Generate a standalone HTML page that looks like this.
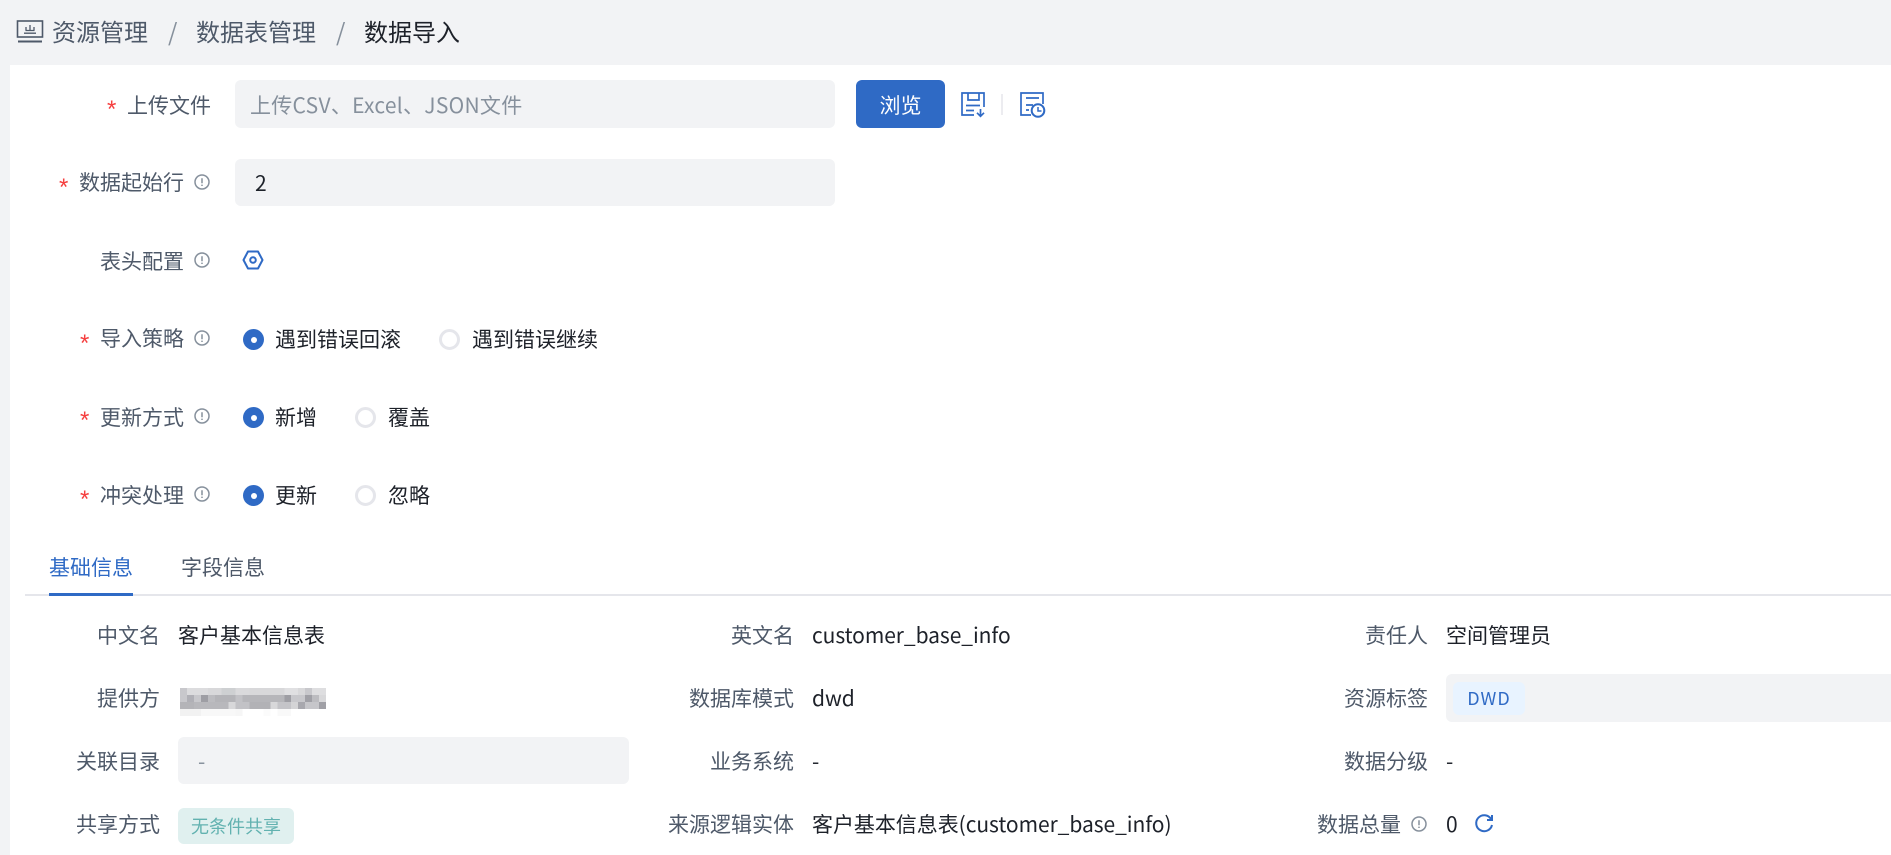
<!DOCTYPE html>
<html lang="zh">
<head>
<meta charset="utf-8">
<title>数据导入</title>
<style>
html,body{margin:0;padding:0;width:1891px;height:855px;overflow:hidden;background:#f2f3f5}
body{position:relative;font-family:"Noto Sans CJK SC","Liberation Sans",sans-serif;font-size:21px;color:#1d2129}
#w{position:absolute;left:10px;top:65px;width:1881px;height:790px;background:#fff}
.t{position:absolute;white-space:nowrap;line-height:30px;height:30px}
.l{color:#4e5969}
.s{color:#f53f3f;font-family:"Liberation Sans",sans-serif;font-size:24px}
.box{position:absolute;background:#f2f3f5;border-radius:6px}
.r{position:absolute;width:21px;height:21px;border-radius:50%;box-sizing:border-box}
.on{background:#2f6ac5}
.on:after{content:"";position:absolute;left:7.5px;top:7.5px;width:6px;height:6px;border-radius:50%;background:#fff}
.off{border:3px solid #e5e6eb;background:#fff}
svg{position:absolute;overflow:visible}
.i{width:16px;height:16px}
</style>
</head>
<body>
<div id="w"></div>

<!-- breadcrumb -->
<svg style="left:0;top:0" width="60" height="60" fill="none" stroke="#4e5969" stroke-width="1.6">
<rect x="17.5" y="21" width="25" height="16"/>
<path d="M18 41.5H42" stroke-width="2"/>
<path d="M24 33.2H36M25.5 30.5H34.5M30 25V30.5M26 27V30.5M34 27V30.5" stroke-width="1.3"/>
</svg>
<div class="t l" style="left:52px;top:16px;font-size:24px">资源管理</div>
<div class="t" style="left:168px;top:16px;font-size:24px;color:#86909c">/</div>
<div class="t l" style="left:196px;top:16px;font-size:24px">数据表管理</div>
<div class="t" style="left:336px;top:16px;font-size:24px;color:#86909c">/</div>
<div class="t" style="left:364px;top:16px;font-size:24px">数据导入</div>

<!-- row: upload -->
<div class="t s" style="left:107px;top:95px">*</div>
<div class="t l" style="left:127px;top:90px">上传文件</div>
<div class="box" style="left:235px;top:80px;width:600px;height:48px"></div>
<div class="t" style="left:250px;top:90px;color:#86909c;letter-spacing:.28px">上传CSV、Excel、JSON文件</div>
<div style="position:absolute;left:856px;top:80px;width:89px;height:48px;background:#2f6ac5;border-radius:6px;color:#fff;text-align:center;line-height:50px">浏览</div>
<svg style="left:0;top:0" width="1100" height="130" fill="none" stroke="#2f6ac5" stroke-width="1.7">
<path d="M974 115H962V93H984V107"/>
<path d="M968 93V100H979V93"/>
<path d="M966 105.5H980M966 110.5H974"/>
<path d="M980.5 109V116M977 112.8L980.5 116.3L984 112.8"/>
<path d="M1002 94V115" stroke="#e5e6eb" stroke-width="1.5"/>
<path d="M1031 115H1021V93H1043V104"/>
<path d="M1026 98H1039M1026 105H1033M1026 110H1029"/>
<circle cx="1038" cy="110.5" r="6.3" fill="#fff" stroke-width="2"/>
<path d="M1038 107V111H1041.5" stroke-width="1.5"/>
</svg>

<!-- row: start -->
<div class="t s" style="left:59px;top:173px">*</div>
<div class="t l" style="left:79px;top:167px">数据起始行</div>
<svg class="i" style="left:194px;top:174px" viewBox="0 0 16 16" fill="none" stroke="#86909c" stroke-width="1.5"><circle cx="8" cy="8" r="7"/><path d="M8 4.2V9.2M8 10.6V12"/></svg>
<div class="box" style="left:235px;top:159px;width:600px;height:47px"></div>
<div class="t" style="left:255px;top:168px">2</div>

<!-- row: header -->
<div class="t l" style="left:100px;top:246px">表头配置</div>
<svg class="i" style="left:194px;top:252px" viewBox="0 0 16 16" fill="none" stroke="#86909c" stroke-width="1.5"><circle cx="8" cy="8" r="7"/><path d="M8 4.2V9.2M8 10.6V12"/></svg>
<svg style="left:242px;top:250px" width="22" height="20" viewBox="0 0 22 20" fill="none" stroke="#2f6ac5" stroke-width="2"><path d="M1.5 10L6 1.5H16L20.5 10L16 18.5H6Z" stroke-linejoin="round"/><circle cx="11" cy="10" r="2.8"/></svg>

<!-- row: strategy -->
<div class="t s" style="left:80px;top:329px">*</div>
<div class="t l" style="left:100px;top:323px">导入策略</div>
<svg class="i" style="left:194px;top:330px" viewBox="0 0 16 16" fill="none" stroke="#86909c" stroke-width="1.5"><circle cx="8" cy="8" r="7"/><path d="M8 4.2V9.2M8 10.6V12"/></svg>
<div class="r on" style="left:243px;top:329px"></div>
<div class="t" style="left:275px;top:324px">遇到错误回滚</div>
<div class="r off" style="left:439px;top:329px"></div>
<div class="t" style="left:472px;top:324px">遇到错误继续</div>

<!-- row: update -->
<div class="t s" style="left:80px;top:406px">*</div>
<div class="t l" style="left:100px;top:402px">更新方式</div>
<svg class="i" style="left:194px;top:408px" viewBox="0 0 16 16" fill="none" stroke="#86909c" stroke-width="1.5"><circle cx="8" cy="8" r="7"/><path d="M8 4.2V9.2M8 10.6V12"/></svg>
<div class="r on" style="left:243px;top:407px"></div>
<div class="t" style="left:275px;top:402px">新增</div>
<div class="r off" style="left:355px;top:407px"></div>
<div class="t" style="left:388px;top:402px">覆盖</div>

<!-- row: conflict -->
<div class="t s" style="left:80px;top:485px">*</div>
<div class="t l" style="left:100px;top:480px">冲突处理</div>
<svg class="i" style="left:194px;top:486px" viewBox="0 0 16 16" fill="none" stroke="#86909c" stroke-width="1.5"><circle cx="8" cy="8" r="7"/><path d="M8 4.2V9.2M8 10.6V12"/></svg>
<div class="r on" style="left:243px;top:485px"></div>
<div class="t" style="left:275px;top:480px">更新</div>
<div class="r off" style="left:355px;top:485px"></div>
<div class="t" style="left:388px;top:480px">忽略</div>

<!-- tabs -->
<div class="t" style="left:49px;top:552px;color:#2f6ac5">基础信息</div>
<div class="t l" style="left:181px;top:552px">字段信息</div>
<div style="position:absolute;left:25px;top:594px;width:1866px;height:1.5px;background:#e5e6eb"></div>
<div style="position:absolute;left:49px;top:593px;width:84px;height:3px;background:#2f6ac5"></div>

<!-- col 1 -->
<div class="t l" style="left:97px;top:620px">中文名</div>
<div class="t" style="left:178px;top:620px">客户基本信息表</div>
<div class="t l" style="left:97px;top:683px">提供方</div>
<svg style="left:180px;top:688px" width="146" height="28" viewBox="0 0 147 28" preserveAspectRatio="none" shape-rendering="crispEdges">
<rect x="0" y="0" width="7" height="7" fill="#c8c8cc"/><rect x="7" y="0" width="21" height="7" fill="#dcdcde"/><rect x="28" y="0" width="14" height="7" fill="#d8d8da"/><rect x="42" y="0" width="14" height="7" fill="#ced0d2"/><rect x="56" y="0" width="14" height="7" fill="#dadadc"/><rect x="70" y="0" width="35" height="7" fill="#d8d8da"/><rect x="105" y="0" width="14" height="7" fill="#e0e0e2"/><rect x="119" y="0" width="7" height="7" fill="#d8d8da"/><rect x="126" y="0" width="7" height="7" fill="#c8c8cc"/><rect x="133" y="0" width="14" height="7" fill="#dedee0"/>
<rect x="0" y="7" width="7" height="7" fill="#c8c8cc"/><rect x="7" y="7" width="7" height="7" fill="#b0b0b6"/><rect x="14" y="7" width="7" height="7" fill="#c8c8cc"/><rect x="21" y="7" width="7" height="7" fill="#9e9ea4"/><rect x="28" y="7" width="7" height="7" fill="#bcbcc0"/><rect x="35" y="7" width="21" height="7" fill="#b4b4b8"/><rect x="56" y="7" width="7" height="7" fill="#c2c2c6"/><rect x="63" y="7" width="42" height="7" fill="#b6b6ba"/><rect x="105" y="7" width="7" height="7" fill="#9e9ea4"/><rect x="112" y="7" width="14" height="7" fill="#c8c8cc"/><rect x="126" y="7" width="7" height="7" fill="#a0a0a6"/><rect x="133" y="7" width="7" height="7" fill="#bcbcc0"/><rect x="140" y="7" width="7" height="7" fill="#d8d8da"/>
<rect x="0" y="14" width="14" height="7" fill="#b4b4b8"/><rect x="14" y="14" width="35" height="7" fill="#b8b8bc"/><rect x="49" y="14" width="7" height="7" fill="#d8d8da"/><rect x="56" y="14" width="14" height="7" fill="#c2c2c6"/><rect x="70" y="14" width="21" height="7" fill="#b2b2b6"/><rect x="91" y="14" width="7" height="7" fill="#d8d8da"/><rect x="98" y="14" width="14" height="7" fill="#c4c4c8"/><rect x="112" y="14" width="7" height="7" fill="#d4d4d6"/><rect x="119" y="14" width="7" height="7" fill="#a8a8ae"/><rect x="126" y="14" width="14" height="7" fill="#c6c6ca"/><rect x="140" y="14" width="7" height="7" fill="#a0a0a6"/>
<rect x="0" y="21" width="21" height="7" fill="#f2f2f2"/><rect x="21" y="21" width="35" height="7" fill="#f8f8f8"/><rect x="56" y="21" width="7" height="7" fill="#f6f6f6"/><rect x="84" y="21" width="7" height="7" fill="#fbfbfb"/><rect x="98" y="21" width="14" height="7" fill="#f9f9f9"/>
</svg>
<div class="t l" style="left:76px;top:746px">关联目录</div>
<div class="box" style="left:178px;top:737px;width:451px;height:47px"></div>
<div class="t" style="left:198px;top:746px;color:#86909c">-</div>
<div class="t l" style="left:76px;top:809px">共享方式</div>
<div style="position:absolute;left:178px;top:808px;width:116px;height:36px;line-height:36px;text-align:center;background:#e0f0ef;border-radius:6px;font-size:18px;color:#62b2b0">无条件共享</div>

<!-- col 2 -->
<div class="t l" style="left:731px;top:620px">英文名</div>
<div class="t" style="left:812px;top:620px;letter-spacing:-.06px">customer_base_info</div>
<div class="t l" style="left:689px;top:683px">数据库模式</div>
<div class="t" style="left:812px;top:683px">dwd</div>
<div class="t l" style="left:710px;top:746px">业务系统</div>
<div class="t" style="left:812px;top:746px">-</div>
<div class="t l" style="left:668px;top:809px">来源逻辑实体</div>
<div class="t" style="left:812px;top:809px;letter-spacing:-.05px">客户基本信息表(customer_base_info)</div>

<!-- col 3 -->
<div class="t l" style="left:1365px;top:620px">责任人</div>
<div class="t" style="left:1446px;top:620px">空间管理员</div>
<div class="t l" style="left:1344px;top:683px">资源标签</div>
<div style="position:absolute;left:1446px;top:674px;width:445px;height:48px;background:#f2f3f5;border-radius:6px 0 0 6px"></div>
<div style="position:absolute;left:1453px;top:682px;width:72px;height:33px;line-height:33px;text-align:center;background:#e8f3ff;border-radius:6px;font-size:18px;letter-spacing:1px;color:#2f6ac5">DWD</div>
<div class="t l" style="left:1344px;top:746px">数据分级</div>
<div class="t" style="left:1446px;top:746px">-</div>
<div class="t l" style="left:1317px;top:809px">数据总量</div>
<svg class="i" style="left:1411px;top:816px" viewBox="0 0 16 16" fill="none" stroke="#86909c" stroke-width="1.5"><circle cx="8" cy="8" r="7"/><path d="M8 4.2V9.2M8 10.6V12"/></svg>
<div class="t" style="left:1446px;top:809px">0</div>
<svg style="left:1474px;top:814px" width="20" height="20" viewBox="0 0 20 20" fill="none" stroke="#2f6ac5" stroke-width="2"><path d="M17 5A8 8 0 1 0 18 11"/><path d="M18 1V6H13" stroke-width="2"/></svg>
</body>
</html>
